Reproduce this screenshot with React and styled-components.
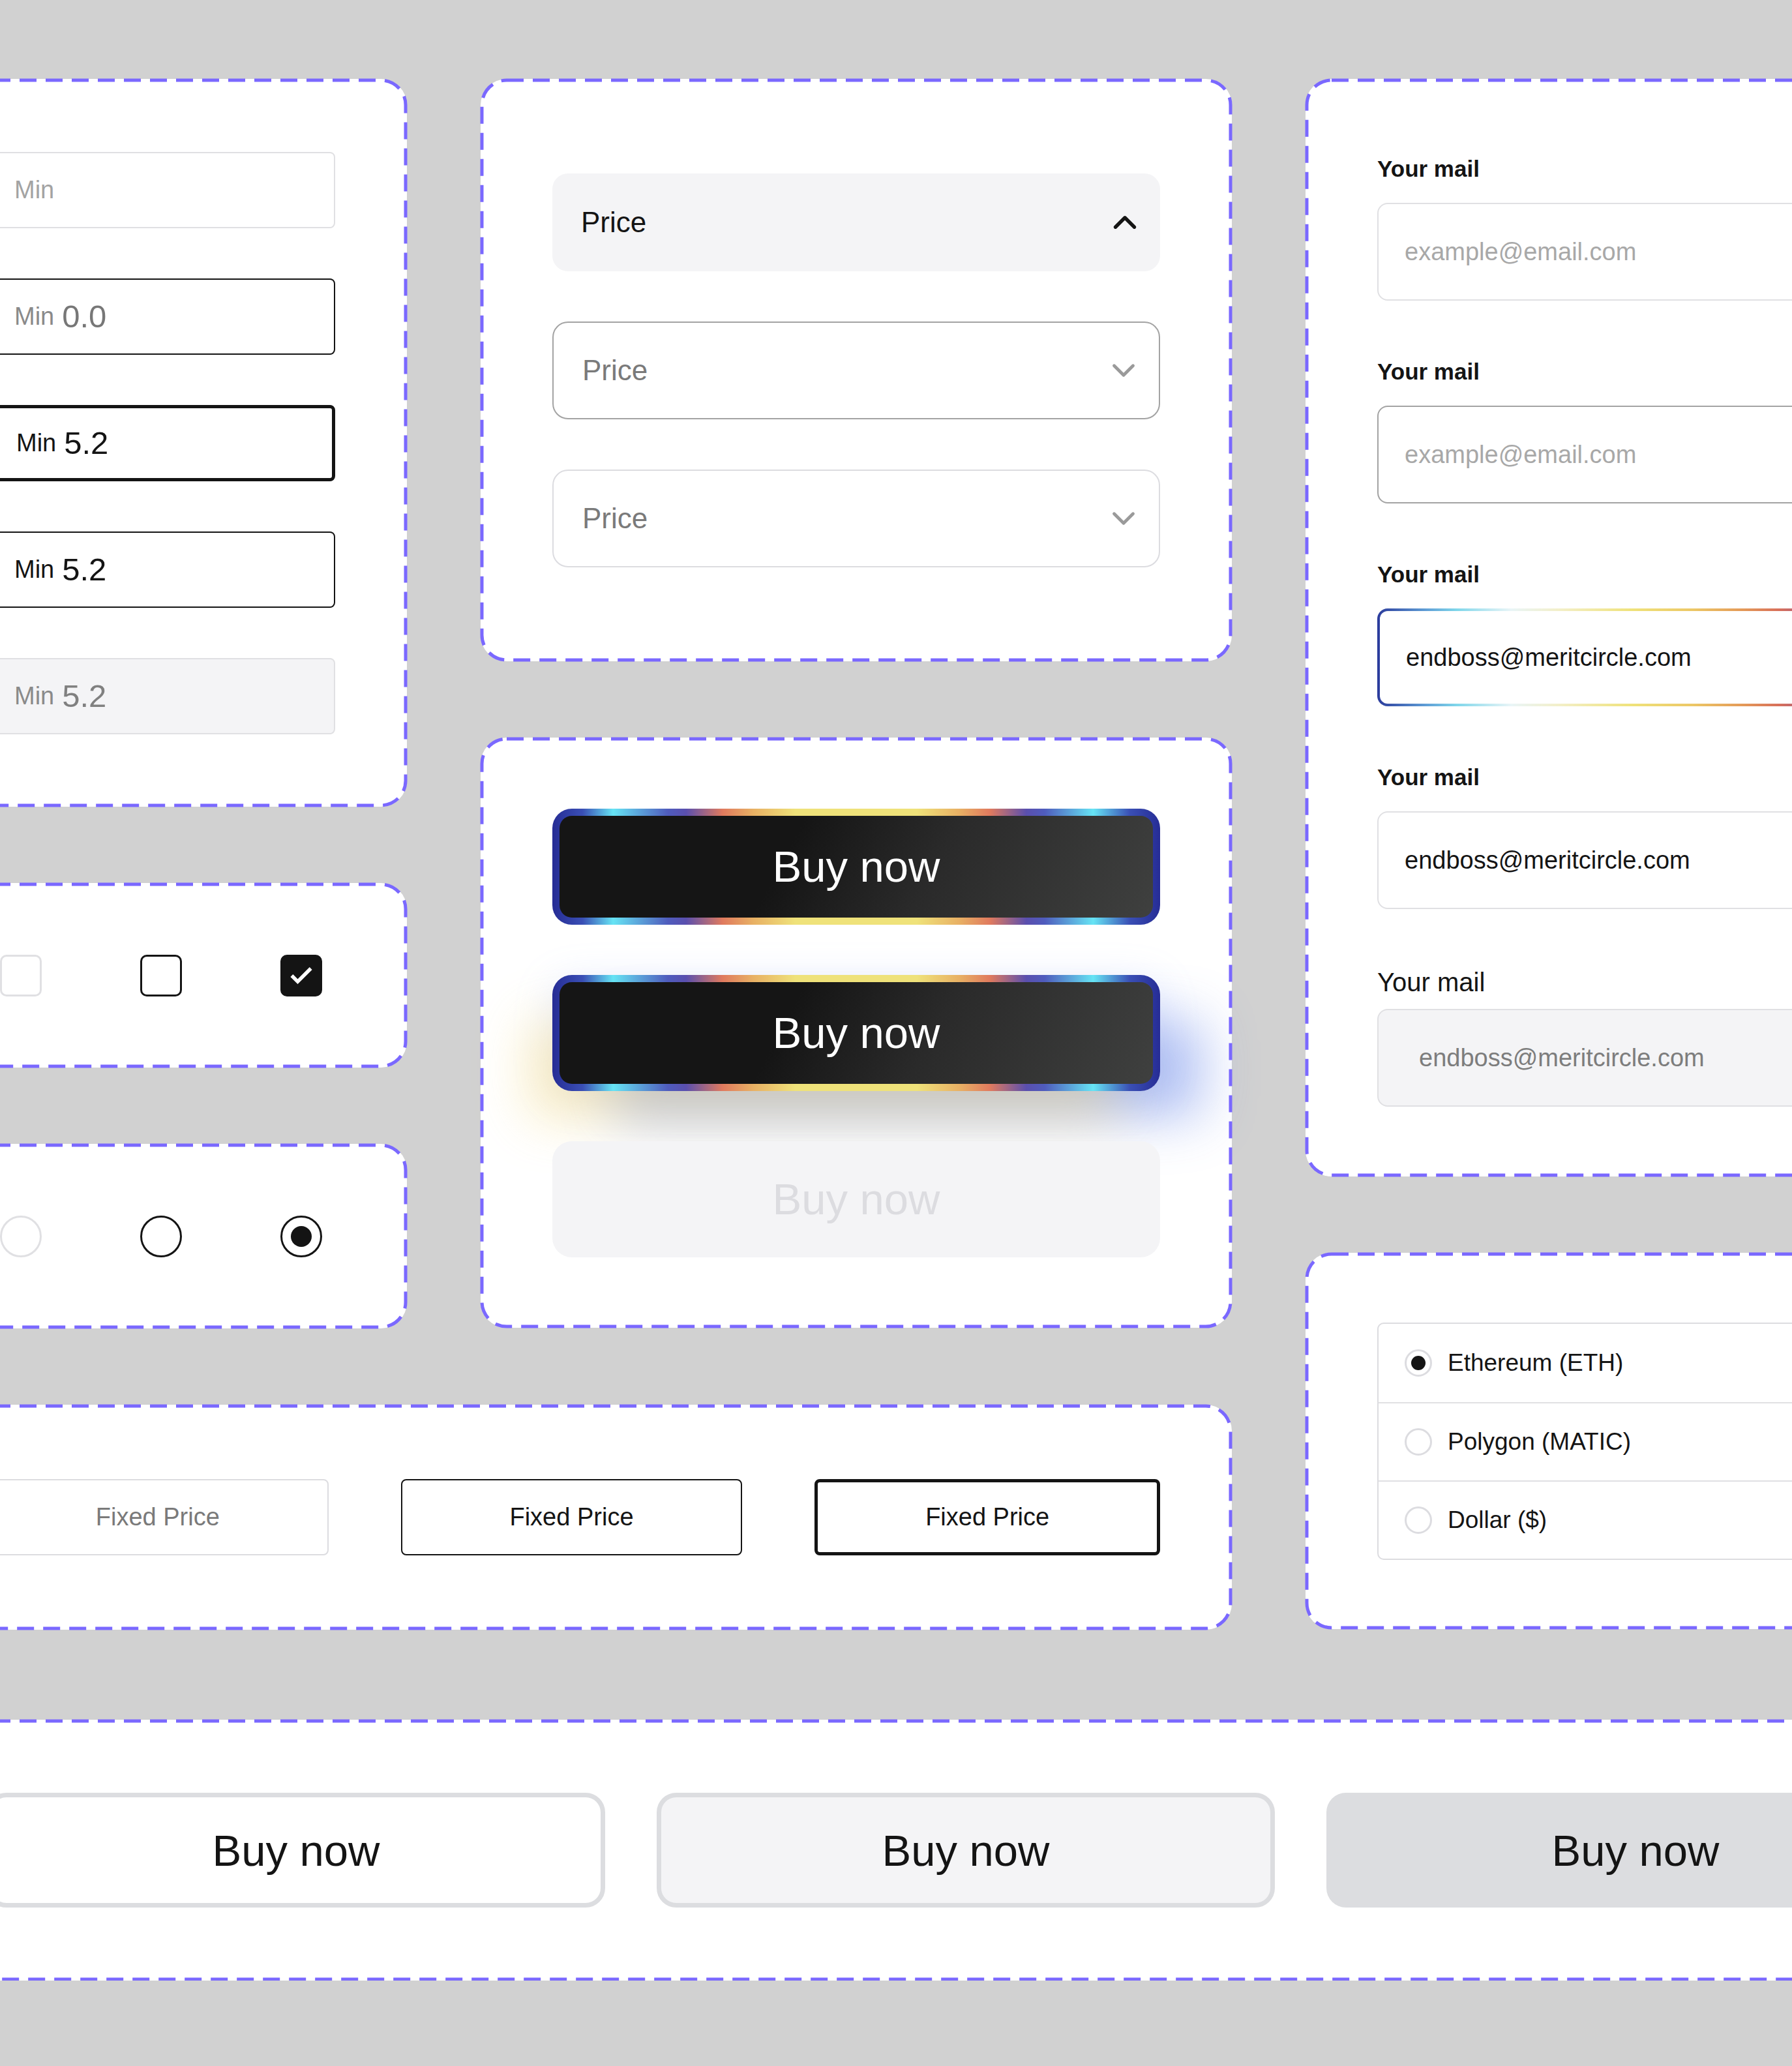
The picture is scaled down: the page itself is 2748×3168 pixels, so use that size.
import React from "react";
import styled, { createGlobalStyle } from "styled-components";
import { Check, ChevronDown, ChevronUp } from "lucide-react";

const GlobalStyle = createGlobalStyle`
  html, body {
    margin: 0;
    background: #d1d1d1;
    overflow: hidden;
    font-family: "Liberation Sans", Helvetica, Arial, sans-serif;
    color: #141414;
  }
  * { box-sizing: border-box; }
`;

const Canvas = styled.div`
  display: flex;
  flex-direction: column;
  gap: 138px;
  width: 3400px;
  margin-left: -130px;
  padding-top: 121px;
`;

const Top = styled.div`
  display: flex;
  gap: 113px;
  align-items: flex-start;
`;

const Stack = styled.div`
  display: flex;
  flex-direction: column;
  gap: 117px;
  width: ${(p) => p.$w}px;
`;

const Columns = styled.div`
  display: flex;
  gap: 113px;
`;

const Panel = styled.div`
  position: relative;
  background: #fff;
  border-radius: 40px;
  height: ${(p) => p.$h}px;
  padding: ${(p) => p.$top || 0}px 110px 0;
  display: flex;
  flex-direction: column;
  justify-content: center;
  gap: ${(p) => p.$gap || 0}px;
`;

const FrameSvg = styled.svg`
  position: absolute;
  inset: 0;
  width: 100%;
  height: 100%;
  pointer-events: none;
  overflow: visible;

  rect {
    x: 2px;
    y: 2px;
    width: calc(100% - 4px);
    height: calc(100% - 4px);
    fill: none;
    stroke: #7a68ff;
    stroke-width: 5;
    stroke-dasharray: 26 14;
  }
`;

const Frame = () => (
  <FrameSvg>
    <rect rx="38" ry="38" />
  </FrameSvg>
);

/* ---------- min inputs ---------- */

const MinField = styled.div`
  height: 117px;
  display: flex;
  align-items: center;
  padding-left: 40px;
  border-radius: 8px;
  background: ${(p) => (p.$disabled ? "#f4f4f6" : "#fff")};
  border: ${(p) => p.$border};
  color: ${(p) => p.$color};
`;

const MinLabel = styled.span`
  font-size: 38px;
  color: ${(p) => p.$color || "inherit"};
`;

const MinValue = styled.span`
  font-size: 49px;
  margin-left: 12px;
`;

/* ---------- checkbox / radio ---------- */

const Row = styled.div`
  display: flex;
  align-items: center;
  justify-content: center;
  gap: 151px;
`;

const Box = styled.div`
  width: 64px;
  height: 64px;
  border-radius: ${(p) => (p.$round ? "50%" : "10px")};
  border: 3px solid ${(p) => p.$line};
  background: ${(p) => p.$fill || "#fff"};
  display: flex;
  align-items: center;
  justify-content: center;
  color: #fff;
`;

const Dot = styled.div`
  width: 32px;
  height: 32px;
  border-radius: 50%;
  background: #141414;
`;

/* ---------- dropdowns ---------- */

const Select = styled.div`
  height: 150px;
  border-radius: 24px;
  display: flex;
  align-items: center;
  justify-content: space-between;
  padding: 0 25px 0 44px;
  font-size: 44px;
  background: ${(p) => (p.$open ? "#f4f4f6" : "#fff")};
  border: ${(p) => (p.$open ? "none" : `2px solid ${p.$line}`)};
  color: ${(p) => (p.$open ? "#141414" : "#7a7a7a")};
`;

/* ---------- gradient buttons ---------- */

const rainbow = `linear-gradient(90deg, #262c95 0%, #3a4fb5 5%, #66e4f4 10%, #4f5cbd 19%, #5a4fae 22%, #e07a5e 28%, #e8b064 33%, #efe27a 40%, #efe27a 60%, #e8b064 67%, #e07a5e 72%, #5a4fae 78%, #4f5cbd 81%, #66e4f4 89%, #3a4fb5 95%, #262c95 100%)`;

const GlowButton = styled.button`
  height: 178px;
  width: 100%;
  border-radius: 30px;
  border: 11px solid transparent;
  background: linear-gradient(118deg, #151515 38%, #2a2a2a 62%, #3f403f 100%) padding-box,
    ${rainbow} border-box;
  color: #fff;
  font-family: inherit;
  font-size: 67px;
  box-shadow: ${(p) =>
    p.$glow
      ? "-50px 55px 80px -14px rgba(245, 215, 120, 0.45), 80px 55px 80px -14px rgba(90, 125, 230, 0.45), 0 10px 60px rgba(140, 170, 255, 0.22)"
      : "none"};
`;

const GhostButton = styled.button`
  height: 178px;
  width: 100%;
  border-radius: 30px;
  border: none;
  background: #f4f4f6;
  color: #dcdce0;
  font-family: inherit;
  font-size: 67px;
`;

/* ---------- fixed price ---------- */

const Segments = styled.div`
  display: flex;
  gap: 111px;
`;

const Segment = styled.button`
  flex: 1;
  height: 117px;
  border-radius: 8px;
  background: #fff;
  border: ${(p) => p.$border};
  color: ${(p) => p.$color};
  font-family: inherit;
  font-size: 38px;
`;

/* ---------- mail ---------- */

const Field = styled.div`
  display: flex;
  flex-direction: column;
  gap: ${(p) => (p.$light ? 17 : 31)}px;
`;

const Label = styled.div`
  font-size: ${(p) => (p.$light ? 40 : 35)}px;
  font-weight: ${(p) => (p.$light ? 400 : 700)};
  line-height: 1.2;
`;

const MailBox = styled.div`
  height: 150px;
  border-radius: 16px;
  display: flex;
  align-items: center;
  padding-left: ${(p) => (p.$disabled ? 62 : 40)}px;
  font-size: 38px;
  border: ${(p) => p.$border};
  background: ${(p) => p.$bg};
  color: ${(p) => p.$color};
`;

const MailStack = styled.div`
  display: flex;
  flex-direction: column;
  gap: 88px;
`;

/* ---------- currency list ---------- */

const List = styled.div`
  border: 2px solid #dcdce0;
  border-radius: 10px;
  display: flex;
  flex-direction: column;
`;

const Option = styled.div`
  height: 120px;
  display: flex;
  align-items: center;
  gap: 24px;
  padding-left: 40px;
  font-size: 37px;
  border-top: ${(p) => (p.$first ? "none" : "2px solid #e0e0e3")};
`;

const OptionRadio = styled.div`
  width: 42px;
  height: 42px;
  border-radius: 50%;
  border: 3px solid #dcdce0;
  display: flex;
  align-items: center;
  justify-content: center;

  &::after {
    content: "";
    width: 22px;
    height: 22px;
    border-radius: 50%;
    background: ${(p) => (p.$on ? "#141414" : "transparent")};
  }
`;

/* ---------- bottom buttons ---------- */

const BigRow = styled.div`
  display: flex;
  gap: 79px;
`;

const BigButton = styled.button`
  width: 948px;
  height: 176px;
  border-radius: 30px;
  border: ${(p) => (p.$bare ? "none" : "7px solid #dcdde0")};
  background: ${(p) => p.$bg};
  color: #141414;
  font-family: inherit;
  font-size: 67px;
`;

const minFields = [
  { border: "2px solid #e0e0e3", color: "#a3a3a3", label: "Min" },
  { border: "2px solid #141414", color: "#777", labelColor: "#8a8a8a", value: "0.0" },
  { border: "5px solid #141414", color: "#141414", value: "5.2" },
  { border: "2px solid #141414", color: "#141414", value: "5.2" },
  { border: "2px solid #e0e0e3", color: "#808080", labelColor: "#8a8a8a", value: "5.2", disabled: true },
];

const mails = [
  { border: "2px solid #e0e0e3", bg: "#fff", color: "#a8a8a8", text: "example@email.com" },
  { border: "2px solid #a3a3a3", bg: "#fff", color: "#a8a8a8", text: "example@email.com" },
  {
    border: "4px solid transparent",
    bg: "linear-gradient(#fff, #fff) padding-box, linear-gradient(90deg, #2b3b9c 0%, #5f9ed6 8%, #7fd6ea 13%, #e9f5f7 22%, #f3efc8 30%, #efe27a 42%, #ecc766 52%, #e49a58 60%, #d8705a 66%, #a35d86 72%, #2b3b9c 100%) border-box",
    color: "#141414",
    text: "endboss@meritcircle.com",
  },
  { border: "2px solid #e0e0e3", bg: "#fff", color: "#141414", text: "endboss@meritcircle.com" },
];

export default function App() {
  return (
    <>
      <GlobalStyle />
      <Canvas>
        <Top>
          <Stack $w={2019}>
            <Columns>
              <Stack $w={754}>
                <Panel $h={1116} $gap={77}>
                  <Frame />
                  {minFields.map((f, i) => (
                    <MinField key={i} $border={f.border} $color={f.color} $disabled={f.disabled}>
                      <MinLabel $color={f.labelColor}>Min</MinLabel>
                      {f.value && <MinValue>{f.value}</MinValue>}
                    </MinField>
                  ))}
                </Panel>
                <Panel $h={283}>
                  <Frame />
                  <Row>
                    <Box $line="#e0e0e3" />
                    <Box $line="#141414" />
                    <Box $line="#141414" $fill="#141414">
                      <Check size={44} strokeWidth={3} strokeLinecap="butt" strokeLinejoin="miter" />
                    </Box>
                  </Row>
                </Panel>
                <Panel $h={283}>
                  <Frame />
                  <Row>
                    <Box $round $line="#e0e0e3" />
                    <Box $round $line="#141414" />
                    <Box $round $line="#141414">
                      <Dot />
                    </Box>
                  </Row>
                </Panel>
              </Stack>
              <Stack $w={1152}>
                <Panel $h={893} $gap={77}>
                  <Frame />
                  <Select $open>
                    Price
                    <ChevronUp size={58} strokeWidth={2.2} color="#141414" />
                  </Select>
                  <Select $line="#a3a3a3">
                    Price
                    <ChevronDown size={58} strokeWidth={2} color="#9a9a9a" />
                  </Select>
                  <Select $line="#dcdce0">
                    Price
                    <ChevronDown size={58} strokeWidth={2} color="#9a9a9a" />
                  </Select>
                </Panel>
                <Panel $h={905} $gap={77}>
                  <Frame />
                  <GlowButton>Buy now</GlowButton>
                  <GlowButton $glow>Buy now</GlowButton>
                  <GhostButton>Buy now</GhostButton>
                </Panel>
              </Stack>
            </Columns>
            <Panel $h={345}>
              <Frame />
              <Segments>
                <Segment $border="2px solid #dcdce0" $color="#7a7a7a">Fixed Price</Segment>
                <Segment $border="2px solid #141414" $color="#141414">Fixed Price</Segment>
                <Segment $border="5px solid #141414" $color="#141414">Fixed Price</Segment>
              </Segments>
            </Panel>
          </Stack>
          <Stack $w={1152}>
            <Panel $h={1683} $top={10}>
              <Frame />
              <MailStack>
                {mails.map((m, i) => (
                  <Field key={i}>
                    <Label>Your mail</Label>
                    <MailBox $border={m.border} $bg={m.bg} $color={m.color}>
                      {m.text}
                    </MailBox>
                  </Field>
                ))}
                <Field $light>
                  <Label $light>Your mail</Label>
                  <MailBox $disabled $border="2px solid #e0e0e3" $bg="#f4f4f6" $color="#7d7d7d">
                    endboss@meritcircle.com
                  </MailBox>
                </Field>
              </MailStack>
            </Panel>
            <Panel $h={577}>
              <Frame />
              <List>
                <Option $first>
                  <OptionRadio $on />
                  Ethereum (ETH)
                </Option>
                <Option>
                  <OptionRadio />
                  Polygon (MATIC)
                </Option>
                <Option>
                  <OptionRadio />
                  Dollar ($)
                </Option>
              </List>
            </Panel>
          </Stack>
        </Top>
        <Panel $h={400}>
          <Frame />
          <BigRow>
            <BigButton $bg="#fff">Buy now</BigButton>
            <BigButton $bg="#f4f4f6">Buy now</BigButton>
            <BigButton $bare $bg="#dcdde0">Buy now</BigButton>
          </BigRow>
        </Panel>
      </Canvas>
    </>
  );
}
